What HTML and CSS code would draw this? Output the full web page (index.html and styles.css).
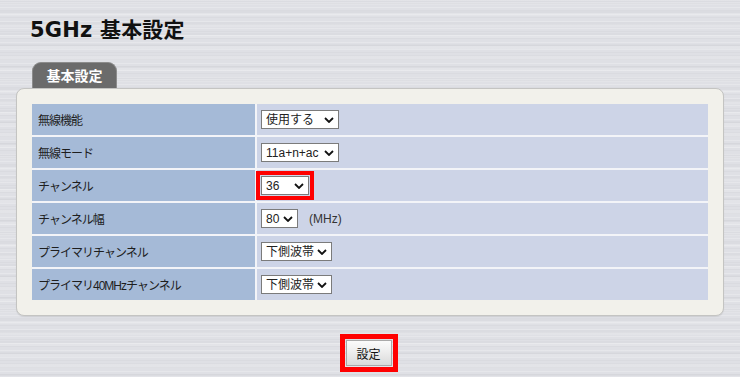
FILE: index.html
```html
<!DOCTYPE html>
<html lang="ja">
<head>
<meta charset="utf-8">
<title>5GHz 基本設定</title>
<link rel="stylesheet" href="styles.css">
</head>
<body>
<h1 class="title">5GHz 基本設定</h1>
<div class="tab">基本設定</div>
<div class="panel">
  <table class="settings">
    <tr>
      <td class="label">無線機能</td>
      <td class="value"><select class="sel w78"><option>使用する</option></select></td>
    </tr>
    <tr>
      <td class="label">無線モード</td>
      <td class="value"><select class="sel w78"><option>11a+n+ac</option></select></td>
    </tr>
    <tr>
      <td class="label">チャンネル</td>
      <td class="value"><select class="sel w48 marked"><option>36</option></select></td>
    </tr>
    <tr>
      <td class="label">チャンネル幅</td>
      <td class="value"><select class="sel w37"><option>80</option></select><span class="unit">(MHz)</span></td>
    </tr>
    <tr>
      <td class="label">プライマリチャンネル</td>
      <td class="value"><select class="sel w71"><option>下側波帯</option></select></td>
    </tr>
    <tr>
      <td class="label">プライマリ40MHzチャンネル</td>
      <td class="value"><select class="sel w71"><option>下側波帯</option></select></td>
    </tr>
  </table>
</div>
<div class="actions">
  <button class="btn" type="button">設定</button>
</div>
</body>
</html>
```
FILE: styles.css
```css
html, body {
  margin: 0;
  padding: 0;
}
body {
  width: 740px;
  height: 377px;
  overflow: hidden;
  font-family: "Liberation Sans", "Noto Sans CJK JP", sans-serif;
  font-size: 12px;
  color: #222;
  background-color: #dfe0e5;
  background-image:
    repeating-linear-gradient(180deg,
      rgba(255,255,255,0.22) 0px, rgba(255,255,255,0.22) 1px,
      rgba(0,0,0,0) 1px, rgba(0,0,0,0) 3px,
      rgba(0,0,0,0.025) 3px, rgba(0,0,0,0.025) 4px,
      rgba(0,0,0,0) 4px, rgba(0,0,0,0) 7px),
    repeating-linear-gradient(180deg,
      rgba(0,0,0,0.02) 0px, rgba(0,0,0,0.02) 2px,
      rgba(255,255,255,0.12) 2px, rgba(255,255,255,0.12) 5px,
      rgba(0,0,0,0) 5px, rgba(0,0,0,0) 11px);
}
.title {
  margin: 0;
  padding: 17px 0 0 30px;
  height: 62px;
  box-sizing: border-box;
  font-family: "DejaVu Sans", "Noto Sans CJK JP", sans-serif;
  font-size: 21px;
  font-weight: bold;
  line-height: 26px;
  color: #111;
  letter-spacing: 0.2px;
}
.tab {
  margin-left: 32px;
  width: 85px;
  height: 26px;
  box-sizing: border-box;
  background: #6b6b6b;
  border: 1px solid #8c8c8c;
  border-bottom: none;
  border-radius: 9px 9px 0 0;
  color: #fff;
  font-family: "Noto Sans CJK JP", sans-serif;
  font-weight: bold;
  font-size: 14px;
  line-height: 25px;
  text-align: center;
}
.panel {
  margin: 0 16px 0 16px;
  width: 708px;
  height: 228px;
  box-sizing: border-box;
  padding: 16px 15px 15px 16px;
  background: #f2f1eb;
  border: 1px solid #c4c4c2;
  border-radius: 8px;
  box-shadow: 0 1px 1px rgba(0,0,0,0.08);
}
.settings {
  width: 676px;
  margin: -1px 0 0 -1px;
  border-collapse: collapse;
  table-layout: fixed;
}
.settings td {
  height: 31px;
  padding: 0;
  vertical-align: middle;
}
.settings tr + tr td {
  border-top: 2px solid #f3f4f8;
}
.label {
  width: 217px;
  padding-left: 6px !important;
  background: #a5bad7;
  letter-spacing: -1px;
  color: #1e1e1e;
}
.value {
  background: #cdd4e7;
  border-left: 2px solid #f3f4f8;
  padding-left: 4px !important;
}
.sel {
  -webkit-appearance: none;
  appearance: none;
  height: 19px;
  box-sizing: border-box;
  margin: 0;
  padding: 0 0 0 4px;
  border: 1px solid #7b7b7b;
  border-radius: 0;
  background-color: #fff;
  background-image: url("data:image/svg+xml,%3Csvg xmlns='http://www.w3.org/2000/svg' width='10' height='6' viewBox='0 0 10 6'%3E%3Cpath d='M1 1 L5 5 L9 1' fill='none' stroke='%23111' stroke-width='1.8'/%3E%3C/svg%3E");
  background-repeat: no-repeat;
  background-position: right 4px center;
  font-family: "Liberation Sans", "Noto Sans CJK JP", sans-serif;
  font-size: 12px;
  color: #222;
  vertical-align: middle;
}
.w78 { width: 78px; }
.w48 { width: 48px; }
.w37 { width: 37px; }
.w71 { width: 71px; }
.marked {
  outline: 4px solid #ff0000;
  outline-offset: 1px;
}
.unit {
  margin-left: 11px;
  vertical-align: middle;
  color: #333;
}
.actions {
  display: flex;
  justify-content: center;
  padding-top: 24px;
}
.btn {
  width: 46px;
  height: 26px;
  margin-left: -3px;
  padding: 0;
  border: 1px solid #a9a9a9;
  border-radius: 0;
  background: linear-gradient(180deg, #fbfbfb 0%, #ececec 50%, #d9d9d9 100%);
  font-family: "Noto Sans CJK JP", sans-serif;
  font-size: 12px;
  color: #111;
  outline: 5px solid #ff0000;
  outline-offset: 1px;
}
```
